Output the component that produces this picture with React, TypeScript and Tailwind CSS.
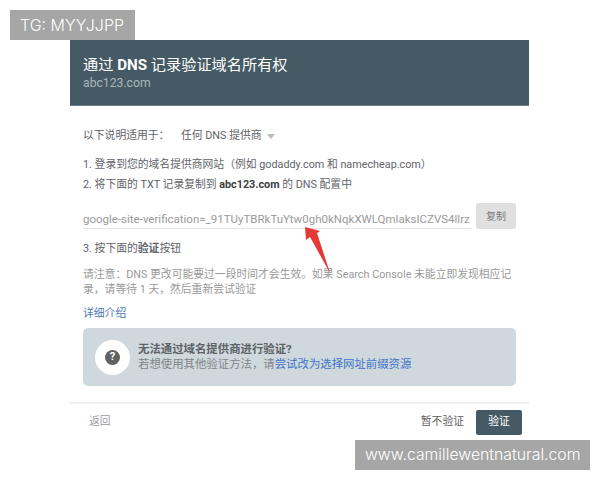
const zh = "font-['Roboto','Noto_Sans_CJK_SC',sans-serif]";

export default function App() {
  return (
    <div className={`relative w-[600px] h-[480px] overflow-hidden bg-white ${zh}`}>
      <div className="absolute left-[10px] top-[10px] w-[125px] h-[30px] bg-[#a6a6a6] text-white text-[16px] leading-[30px] pl-[10px] font-['Inter',sans-serif] font-light">
        TG: MYYJJPP
      </div>

      <div className="ml-[70px] w-[459px] pt-[40px]">
        <header className="h-[66px] bg-[#455a64] pl-[13px] pt-[15px] border-b border-[#6b7c84]">
          <h1 className="text-[15.2px] leading-[20px] text-white">
            通过 <span className="font-bold">DNS</span> 记录验证域名所有权
          </h1>
          <p className="text-[12.2px] leading-[16px] text-[#a9b6bc]">abc123.com</p>
        </header>

        <main className="pl-[13px] pr-[13px] text-[10.8px] text-[#5f6368]">
          <div className="flex items-center mt-[22px] h-[16px]">
            <span className="w-[98px]">以下说明适用于：</span>
            <span>任何 DNS 提供商</span>
            <span className="ml-[5px] mt-[1px] w-0 h-0 border-x-[4px] border-x-transparent border-t-[5px] border-t-[#bdbdbd]" />
          </div>

          <p className="mt-[11px] leading-[20px]">1. 登录到您的域名提供商网站（例如 godaddy.com 和 namecheap.com）</p>
          <p className="leading-[20px]">
            2. 将下面的 TXT 记录复制到 <span className="font-bold text-[#3c4043]">abc123.com</span> 的 DNS 配置中
          </p>

          <div className="flex items-end mt-[8px]">
            <div className="w-[388px] h-[20px] border-b border-[#e3e3e3] text-[#9a9a9a] text-[11.5px] leading-[20px] whitespace-nowrap">
              google-site-verification=_91TUyTBRkTuYtw0gh0kNqkXWLQmlaksICZVS4llrz
            </div>
            <button className="ml-[5px] w-[40px] h-[26px] rounded-[2px] bg-[#e0e0e0] text-[#7a7a7a] text-[10px]">
              复制
            </button>
          </div>

          <p className="mt-[10px] leading-[20px]">
            3. 按下面的<span className="font-bold">验证</span>按钮
          </p>

          <p className="mt-[8px] text-[#9a9a9a] leading-[15px] w-[433px]">
            请注意：DNS 更改可能要过一段时间才会生效。如果 Search Console 未能立即发现相应记录，请等待 1 天，然后重新尝试验证
          </p>

          <a className="block mt-[9px] leading-[16px] text-[#4b78b8]">详细介绍</a>

          <div className="flex items-center mt-[6px] h-[58px] w-[433px] rounded-[5px] bg-[#cfd8dc] pl-[12px]">
            <div className="flex items-center justify-center w-[35px] h-[35px] rounded-full bg-white">
              <span className="flex items-center justify-center w-[15px] h-[15px] rounded-full bg-[#616161] text-white text-[11px] font-bold">?</span>
            </div>
            <div className="ml-[8px] text-[11.4px] leading-[15px]">
              <p className="font-bold text-[#5f6368]">无法通过域名提供商进行验证?</p>
              <p className="text-[#80868b]">
                若想使用其他验证方法，请<span className="text-[#3f74c9]">尝试改为选择网址前缀资源</span>
              </p>
            </div>
          </div>
        </main>

        <footer className="mt-[16px] border-t-2 border-[#eeeeee] flex items-center pl-[19px] pr-[7px] pt-[6px] text-[10.8px]">
          <span className="text-[#9e9e9e]">返回</span>
          <span className="ml-auto text-[#616161]">暂不验证</span>
          <button className="ml-[12px] w-[46px] h-[25px] rounded-[2px] bg-[#455a64] text-white">验证</button>
        </footer>
      </div>

      <div className="absolute left-[355px] top-[440px] w-[235px] h-[30px] bg-[#a6a6a6] text-white text-[15.8px] leading-[30px] pl-[10px] font-['Inter',sans-serif] font-light whitespace-nowrap">
        www.camillewentnatural.com
      </div>

      <svg className="absolute left-[295px] top-[220px]" width="40" height="60" viewBox="0 0 40 60">
        <path d="M10 7 L11 20 L15 17 L35 53 L22 13 L25 11 Z" fill="#e53935" />
      </svg>
    </div>
  );
}
